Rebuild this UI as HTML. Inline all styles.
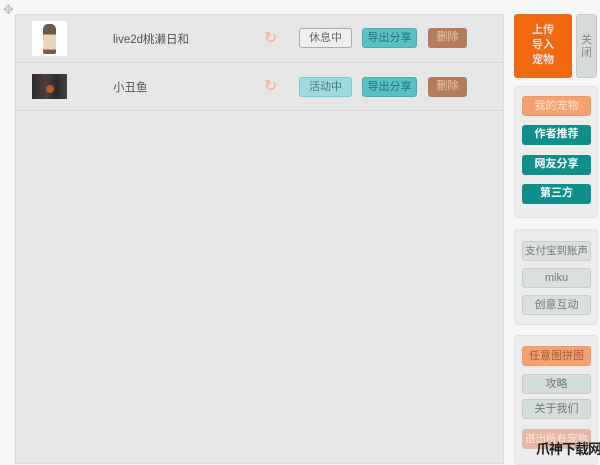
<!DOCTYPE html>
<html><head><meta charset="utf-8"><style>
*{margin:0;padding:0;box-sizing:border-box}
body{width:600px;height:459px;background:#f7f7f7;font-family:"Liberation Sans","Noto Sans CJK SC",sans-serif;position:relative;overflow:hidden;font-size:11px}
.main{position:absolute;left:15px;top:14px;width:489px;height:450px;background:#e6e6e6;border:1px solid #dcdcdc}
.row{position:absolute;left:0;width:100%;height:48px;border-bottom:1px solid #d6d6d6}
.thumb{position:absolute;left:16px;top:6px;width:35px;height:35px}
.name{position:absolute;left:97px;top:16px;color:#555;font-size:11.5px}
.ref{position:absolute;left:248px;top:13px;color:#f5b08a;font-size:16px}
.b{position:absolute;height:20px;border-radius:3px;text-align:center;line-height:18px;font-size:11px;white-space:nowrap}
.side{position:absolute;border-radius:4px;background:#ececec;border:1px solid #e2e2e2}
.sb{position:absolute;left:7px;width:69px;height:20px;border-radius:3px;text-align:center;line-height:19px;font-size:11px;white-space:nowrap;overflow:hidden}
.o{background:#f5a06e;color:#fde2cf;border:1px solid #e89a6a}
.t{background:#0f8f8b;color:#fff;font-weight:bold}
.g{background:#dcdfdf;color:#777;border:1px solid #c8cccc}
</style></head><body>
<div style="position:absolute;left:3px;top:2px;color:#bbb;font-size:13px">✥</div>
<div class="main">
 <div class="row" style="top:0">
  <div class="thumb" style="background:#fff"><div style="position:absolute;left:11px;top:3px;width:13px;height:30px;background:linear-gradient(#6b5a4e 0 35%,#e8d5b5 35% 85%,#7a5c44 85%);border-radius:5px 5px 2px 2px"></div></div>
  <div class="name">live2d桃濑日和</div>
  <div class="ref">↻</div>
  <div class="b" style="left:283px;top:13px;width:53px;background:#eef0f0;border:1px solid #aab;color:#666">休息中</div>
  <div class="b" style="left:346px;top:13px;width:55px;background:#58c3c6;border:1px solid #48aeb1;color:#2a6e70">导出分享</div>
  <div class="b" style="left:412px;top:13px;width:39px;background:#b47b5c;color:#e7c3ad">删除</div>
 </div>
 <div class="row" style="top:48px">
  <div class="thumb" style="top:11px;height:25px;background:linear-gradient(90deg,#2b2b2b,#503d3d 40%,#2a2a2a 70%,#444)"><div style="position:absolute;left:14px;top:11px;width:8px;height:8px;border-radius:50%;background:#c5561f"></div></div>
  <div class="name">小丑鱼</div>
  <div class="ref">↻</div>
  <div class="b" style="left:283px;top:14px;width:53px;background:#9edbdc;border:1px solid #7cc;color:#4a7778">活动中</div>
  <div class="b" style="left:346px;top:14px;width:55px;background:#58c3c6;border:1px solid #48aeb1;color:#2a6e70">导出分享</div>
  <div class="b" style="left:412px;top:14px;width:39px;background:#b47b5c;color:#e7c3ad">删除</div>
 </div>
</div>
<div style="position:absolute;left:514px;top:14px;width:58px;height:64px;background:#f26a10;border-radius:3px;color:#fde;font-weight:bold;font-size:11px;text-align:center;padding-top:9px;line-height:15px">上传<br>导入<br>宠物</div>
<div style="position:absolute;left:576px;top:14px;width:21px;height:64px;background:#d6dada;border:1px solid #c6caca;border-radius:3px;color:#888;font-size:11px;text-align:center;padding-top:19px;line-height:13px">关<br>闭</div>
<div class="side" style="left:514px;top:86px;width:84px;height:132px">
 <div class="sb o" style="top:9px">我的宠物</div>
 <div class="sb t" style="top:38px">作者推荐</div>
 <div class="sb t" style="top:68px">网友分享</div>
 <div class="sb t" style="top:97px">第三方</div>
</div>
<div class="side" style="left:514px;top:229px;width:84px;height:96px">
 <div class="sb g" style="top:11px;font-size:10.5px">支付宝到账声</div>
 <div class="sb g" style="top:38px">miku</div>
 <div class="sb g" style="top:65px">创意互动</div>
</div>
<div class="side" style="left:514px;top:335px;width:84px;height:130px">
 <div class="sb o" style="top:10px;color:#a06040">任意图拼图</div>
 <div class="sb g" style="top:38px;background:#d4dcdc">攻略</div>
 <div class="sb g" style="top:63px;background:#d4dcdc">关于我们</div>
 <div class="sb" style="top:93px;background:#e6b7a2;color:#fbe8df;border:1px solid #dba;font-size:10.5px">退出所有宠物</div>
</div>
<div style="position:absolute;left:536px;top:441px;font-size:14px;font-weight:bold;color:#222;letter-spacing:-1px;white-space:nowrap;line-height:16px">爪神下载网</div>
</body></html>
